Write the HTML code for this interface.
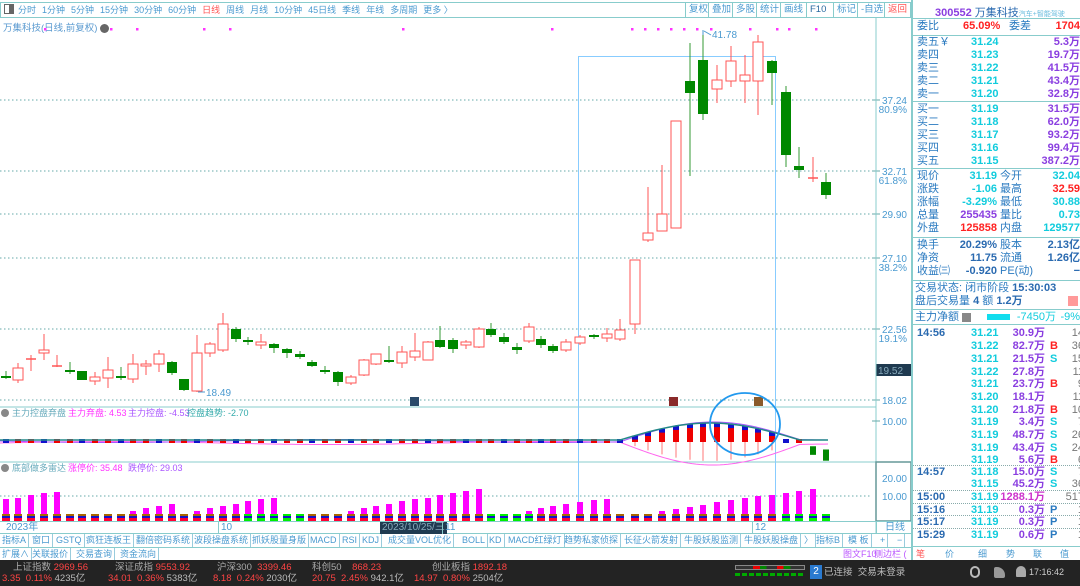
<!DOCTYPE html><html><head><meta charset="utf-8"><style>
*{margin:0;padding:0;box-sizing:border-box}
body{width:1080px;height:586px;overflow:hidden;background:#fff;font-family:"Liberation Sans","Noto Sans CJK SC",sans-serif;position:relative}
.a{position:absolute;white-space:nowrap}
#top{position:absolute;left:0;top:2px;width:911px;height:16px;border:1px solid #8cc;font-size:9px;color:#4a9ad0;line-height:14px;white-space:nowrap}
#top span{margin-right:6px}
.tb{position:absolute;top:2px;height:16px;border-left:1px solid #8cc;font-size:9.5px;color:#4a9ad0;padding:0 3px;line-height:15px}
#rp{position:absolute;left:911px;top:0;width:169px;height:560px;border-left:2px solid #8cc;font-size:11px}
.r{position:absolute;left:2px;width:165px;height:13px;line-height:13px}
.l{color:#2a7ac0;position:absolute;left:2px}
.hl{position:absolute;left:0;width:169px;border-top:1px solid #8cc}
.btn{position:absolute;font-size:9px;color:#4a9ad0;border-right:1px solid #9cd;padding:0 2px;height:13px;line-height:13px}
</style></head><body>
<div id="top"><span style="display:inline-block;width:10px;height:10px;border:1px solid #666;margin:1px 4px 0 3px;vertical-align:top;background:linear-gradient(90deg,#fff 50%,#666 50%)"></span><span>分时</span><span>1分钟</span><span>5分钟</span><span>15分钟</span><span>30分钟</span><span>60分钟</span><span style="color:#f55">日线</span><span>周线</span><span>月线</span><span>10分钟</span><span>45日线</span><span>季线</span><span>年线</span><span>多周期</span><span>更多 〉</span></div>
<div class="tb" style="left:685px">复权</div><div class="tb" style="left:708px">叠加</div><div class="tb" style="left:732px">多股</div><div class="tb" style="left:756px">统计</div><div class="tb" style="left:780px">画线</div><div class="tb" style="left:806px;color:#2a6aa0">F10</div><div class="tb" style="left:833px">标记</div><div class="tb" style="left:857px">-自选</div><div class="tb" style="left:884px;color:#f55;border-right:1px solid #8cc">返回</div>
<div class="a" style="left:3px;top:20px;font-size:9.5px;color:#5a9ad0">万集科技(日线,前复权) <span style="display:inline-block;width:9px;height:9px;border-radius:5px;background:#666;vertical-align:middle"></span></div>
<svg id="ch" class="a" style="left:0;top:0" width="911" height="535"></svg>
<div class="a" style="left:0;top:521px;width:911px;height:13px;border-top:1px solid #8cc;border-bottom:1px solid #8cc;font-size:10px;color:#4a9ad0;line-height:12px">
<span class="a" style="left:6px">2023年</span><span class="a" style="left:218px;border-left:1px solid #8cc;padding-left:2px">10</span><span class="a" style="left:380px;background:#1f3a50;color:#8ab;padding:0 2px">2023/10/25/三</span><span class="a" style="left:442px;border-left:1px solid #8cc;padding-left:2px">11</span><span class="a" style="left:752px;border-left:1px solid #8cc;padding-left:2px">12</span><span class="a" style="left:876px;border-left:1px solid #8cc;padding-left:8px;width:35px">日线</span></div>
<div class="a" style="left:0;top:534px;width:911px;height:14px;border-bottom:1px solid #8cc">
<span class="btn" style="left:0">指标A</span><span class="btn" style="left:30px">窗口</span><span class="btn" style="left:54px">GSTQ</span><span class="btn" style="left:84px">疯狂连板王</span><span class="btn" style="left:134px">翻倍密码系统</span><span class="btn" style="left:192px">波段操盘系统</span><span class="btn" style="left:250px">抓妖股量身版</span><span class="btn" style="left:308px">MACD</span><span class="btn" style="left:340px">RSI</span><span class="btn" style="left:360px">KDJ</span><span class="btn" style="left:386px">成交量VOL优化</span><span class="btn" style="left:460px">BOLL</span><span class="btn" style="left:487px">KD</span><span class="btn" style="left:506px">MACD红绿灯</span><span class="btn" style="left:562px">趋势私家侦探</span><span class="btn" style="left:622px">长征火箭发射</span><span class="btn" style="left:682px">牛股妖股监测</span><span class="btn" style="left:742px">牛股妖股操盘</span><span class="btn" style="left:802px">〉</span><span class="btn" style="left:814px">指标B</span><span class="btn" style="left:846px">模 板</span><span class="btn" style="left:878px">+</span><span class="btn" style="left:895px">−</span></div>
<div class="a" style="left:0;top:548px;width:1080px;height:12px;font-size:9px;color:#4a9ad0;line-height:12px">
<span class="btn" style="left:0;height:12px">扩展∧</span><span class="btn" style="left:30px;height:12px">关联报价</span><span class="btn" style="left:74px;height:12px">交易查询</span><span class="btn" style="left:118px;height:12px">资金流向</span><span class="a" style="left:843px;color:#b5f">图文F10</span><span class="a" style="left:874px;color:#b5f">侧边栏 (</span>
<span class="a" style="left:916px;color:#f55">笔</span><span class="a" style="left:945px">价</span><span class="a" style="left:978px">细</span><span class="a" style="left:1006px">势</span><span class="a" style="left:1033px">联</span><span class="a" style="left:1060px">值</span></div>
<div class="a" style="left:0;top:560px;width:1080px;height:26px;background:#232323;font-size:9.5px;line-height:11px">
<div class="a" style="left:13px;top:2px;color:#aaa">上证指数 <span style="color:#f44">2969.56</span></div><div class="a" style="left:2px;top:13px;color:#f44">3.35 &nbsp;0.11% <span style="color:#bbb">4235亿</span></div>
<div class="a" style="left:115px;top:2px;color:#aaa">深证成指 <span style="color:#f44">9553.92</span></div><div class="a" style="left:108px;top:13px;color:#f44">34.01 &nbsp;0.36% <span style="color:#bbb">5383亿</span></div>
<div class="a" style="left:217px;top:2px;color:#aaa">沪深300 &nbsp;<span style="color:#f44">3399.46</span></div><div class="a" style="left:213px;top:13px;color:#f44">8.18 &nbsp;0.24% <span style="color:#bbb">2030亿</span></div>
<div class="a" style="left:312px;top:2px;color:#aaa">科创50 &nbsp;&nbsp;&nbsp;<span style="color:#f44">868.23</span></div><div class="a" style="left:312px;top:13px;color:#f44">20.75 &nbsp;2.45% <span style="color:#bbb">942.1亿</span></div>
<div class="a" style="left:432px;top:2px;color:#aaa">创业板指 <span style="color:#f44">1892.18</span></div><div class="a" style="left:414px;top:13px;color:#f44">14.97 &nbsp;0.80% <span style="color:#bbb">2504亿</span></div>
<div class="a" style="left:735px;top:5px;width:70px;height:5px;border:1px solid #888;background:linear-gradient(90deg,#333 25%,#e00 25%,#e00 35%,#080 35%,#080 45%,#333 45%,#333 60%,#e00 60%,#e00 70%,#080 70%,#080 80%,#333 80%)"></div>
<div class="a" style="left:735px;top:13px;width:70px;height:3px;background:repeating-linear-gradient(90deg,#0a0 0 5px,transparent 5px 7px)"></div>
<div class="a" style="left:810px;top:5px;width:12px;height:14px;background:#2a7ad0;color:#fff;text-align:center;line-height:14px;font-size:10px">2</div>
<div class="a" style="left:824px;top:7px;color:#bbb;font-size:9.5px">已连接 &nbsp;交易未登录</div>
<div class="a" style="left:970px;top:6px;width:10px;height:12px;border-radius:5px;border:2px solid #bbb"></div>
<div class="a" style="left:994px;top:7px;width:11px;height:11px;background:#999;border-radius:2px 8px 2px 2px"></div>
<div class="a" style="left:1016px;top:6px;width:10px;height:11px;background:#aaa;border-radius:5px 5px 1px 1px"></div>
<div class="a" style="left:1029px;top:7px;color:#ccc;font-size:9px">17:16:42</div>
</div>
<div id="rp">
<div class="a" style="left:22px;top:4px;font-size:11px;color:#8a3ee0;font-weight:bold">300552 <span style="font-weight:normal;color:#2a6ab0">万集科技</span><span style="font-size:7px;color:#6bd;font-weight:normal">汽车+智能驾驶</span></div>
<div class="hl" style="top:18px"></div>
<div class="r" style="top:20px"><span class="l">委比</span><span class="a" style="left:48px;color:#f22;font-weight:bold">65.09%</span><span class="a" style="left:94px;color:#2a7ac0">委差</span><span class="a" style="right:0;color:#f22;font-weight:bold">1704</span></div>
<div class="hl" style="top:35px"></div>
<div id="ob"></div>
</div>
<script>
const rp=document.getElementById('ob');let h='';
function row(y,l,p,v){h+=`<div class="r" style="top:${y}px"><span class="l">${l}</span><span class="a" style="left:56px;color:#1cd;font-weight:bold">${p}</span><span class="a" style="right:0;color:#8a3ee0;font-weight:bold">${v}</span></div>`}
[['卖五￥','31.24','5.3万'],['卖四','31.23','19.7万'],['卖三','31.22','41.5万'],['卖二','31.21','43.4万'],['卖一','31.20','32.8万']].forEach((d,i)=>row(36+i*13,...d));
h+='<div class="hl" style="top:101px"></div>';
[['买一','31.19','31.5万'],['买二','31.18','62.0万'],['买三','31.17','93.2万'],['买四','31.16','99.4万'],['买五','31.15','387.2万']].forEach((d,i)=>row(103+i*13,...d));
h+='<div class="hl" style="top:168px"></div>';
function r4(y,a,b,c,d,bc,dc){h+=`<div class="r" style="top:${y}px"><span class="l">${a}</span><span class="a" style="right:83px;color:${bc};font-weight:bold">${b}</span><span class="a" style="left:85px;color:#2a7ac0">${c}</span><span class="a" style="right:0;color:${dc};font-weight:bold">${d}</span></div>`}
r4(170,'现价','31.19','今开','32.04','#1cd','#1cd');r4(183,'涨跌','-1.06','最高','32.59','#1cd','#f22');r4(196,'涨幅','-3.29%','最低','30.88','#1cd','#1cd');r4(209,'总量','255435','量比','0.73','#8a3ee0','#1cd');r4(222,'外盘','125858','内盘','129577','#f22','#1cd');
h+='<div class="hl" style="top:237px"></div>';
r4(239,'换手','20.29%','股本','2.13亿','#2a6ab0','#2a6ab0');r4(252,'净资','11.75','流通','1.26亿','#2a6ab0','#2a6ab0');r4(265,'收益㈢','-0.920','PE(动)','−','#2a6ab0','#2a6ab0');
h+='<div class="hl" style="top:280px"></div>';
h+='<div class="r" style="top:282px;color:#2a7ac0">交易状态: 闭市阶段 <b style="color:#2a6ab0">15:30:03</b></div><div class="r" style="top:295px;color:#2a7ac0">盘后交易量 <b style="color:#2a6ab0">4</b> 额 <b style="color:#2a6ab0">1.2万</b><span class="a" style="right:2px;top:1px;width:10px;height:10px;background:#f99"></span></div>';
h+='<div class="hl" style="top:309px"></div>';
h+='<div class="r" style="top:311px;color:#2a7ac0">主力净额 <span style="display:inline-block;width:9px;height:9px;background:#888;vertical-align:middle"></span><span class="a" style="left:72px;top:3px;width:23px;height:6px;background:#1de"></span><span class="a" style="right:24px;color:#1cd">-7450万</span><span class="a" style="right:0;color:#1cd">-9%</span></div>';
h+='<div class="hl" style="top:324px"></div>';
const T=[['14:56','31.21','30.9万','','14'],['','31.22','82.7万','B','36'],['','31.21','21.5万','S','15'],['','31.22','27.8万','','11'],['','31.21','23.7万','B','9'],['','31.20','18.1万','','11'],['','31.20','21.8万','B','10'],['','31.19','3.4万','S','7'],['','31.19','48.7万','S','26'],['','31.19','43.4万','S','24'],['','31.19','5.6万','B','6'],['14:57','31.18','15.0万','S','7'],['','31.15','45.2万','S','36'],['15:00','31.19','1288.1万','','517'],['15:16','31.19','0.3万','P','1'],['15:17','31.19','0.3万','P','1'],['15:29','31.19','0.6万','P','1']];
const Y=[327,340,353,366,378,391,404,416,429,442,454,466,478,491,504,516,529];
T.forEach((t,i)=>{let y=Y[i];let bc=t[3]=='B'?'#f22':t[3]=='S'?'#1cd':'#2a7ac0';let vc=t[0]=='15:00'?'#c3c':'#8a3ee0';
if(i==11||i>=13)h+=`<div class="hl" style="top:${y-1}px;border-top:1px dotted #8aa"></div>`;
h+=`<div class="r" style="top:${y}px;font-weight:bold"><span class="l" style="color:#2a6ab0">${t[0]}</span><span class="a" style="left:56px;color:#1cd">${t[1]}</span><span class="a" style="right:35px;color:${vc}">${t[2]}</span><span class="a" style="left:135px;color:${bc}">${t[3]}</span><span class="a" style="right:-4px;color:#777;font-weight:normal">${t[4]}</span></div>`});
h+='<div class="hl" style="top:546px"></div>';
rp.innerHTML=h;

const s=document.getElementById('ch');let g='';
function L(x1,y1,x2,y2,c,w,d){g+=`<line x1="${x1}" y1="${y1}" x2="${x2}" y2="${y2}" stroke="${c}" stroke-width="${w||1}" ${d?'stroke-dasharray="'+d+'"':''}/>`}
function Tx(x,y,t,c,sz,a){g+=`<text x="${x}" y="${y}" fill="${c}" font-size="${sz||10}" ${a?'text-anchor="'+a+'"':''} font-family="Liberation Sans,Noto Sans CJK SC,sans-serif">${t}</text>`}
[100,171,214,258,329,400].forEach(y=>L(0,y,872,y,'#6aa','1','1.5 2.5'));
[[100,'37.24','80.9%'],[171,'32.71','61.8%'],[214,'29.90'],[258,'27.10','38.2%'],[329,'22.56','19.1%'],[400,'18.02']].forEach(d=>{L(872,d[0],880,d[0],'#6aa');Tx(907,d[0]+4,d[1],'#4a9ad0',10,'end');if(d[2])Tx(907,d[0]+13,d[2],'#4a9ad0',10,'end')});
g+='<rect x="876" y="364" width="35" height="12" fill="#1f3a50"/>';Tx(878,374,'19.52','#8ab',10);
L(876,18,876,534,'#8cc');
L(0,407,876,407,'#8cc');L(0,462,876,462,'#8cc');
L(872,421,880,421,'#6aa');Tx(907,425,'10.00','#4a9ad0',10,'end');
L(0,496,872,496,'#6aa',1,'1.5 2.5');Tx(907,500,'10.00','#4a9ad0',10,'end');Tx(907,482,'20.00','#4a9ad0',10,'end');
g+='<rect x="876" y="462" width="35" height="59" fill="none" stroke="#699" stroke-width="1.5"/>';
g+='<rect x="578.5" y="56.5" width="197" height="465" fill="none" stroke="#8cf"/>';
[45,111,137,204,230,403,552,632,645,658,671,684,697,711,750,777,789,816].forEach(x=>g+=`<rect x="${x-1}" y="28" width="2.5" height="2.5" fill="#f3f"/>`);
const C=[[6,'g',376,378,371,379],[18,'r',368,380,363,383],[31,'r',359,360,355,371],[44,'r',350,353,334,360],[57,'r',366,366,355,367],[70,'g',370,372,362,374],[82,'g',371,380,371,380],[95,'r',377,381,372,385],[108,'r',370,378,357,388],[121,'g',376,378,367,380],[133,'r',364,379,354,383],[146,'r',364,366,360,375],[159,'r',354,364,350,372],[172,'g',362,373,361,375],[184,'g',379,390,379,391],[197,'r',353,391,335,392],[210,'r',344,353,342,357],[223,'r',324,350,313,352],[236,'g',329,339,327,342],[248,'g',340,342,337,345],[261,'r',342,345,334,349],[274,'g',344,348,343,353],[287,'g',349,353,348,358],[300,'g',354,357,351,359],[312,'g',362,366,360,367],[325,'g',370,372,366,374],[338,'g',372,382,371,386],[351,'r',377,383,375,385],[364,'r',360,375,359,376],[376,'r',354,364,354,365],[389,'g',360,362,346,363],[402,'r',352,363,346,368],[415,'r',351,357,333,361],[428,'r',342,360,341,360],[440,'g',340,347,326,348],[453,'g',340,349,338,353],[466,'r',342,345,340,349],[479,'r',329,347,327,348],[491,'g',329,335,323,337],[504,'g',337,342,333,344],[517,'g',347,350,343,354],[529,'r',327,341,323,343],[541,'g',339,345,336,348],[553,'g',346,351,344,353],[566,'r',342,350,339,352],[580,'r',337,343,335,345],[594,'g',335,337,334,339],[607,'r',334,338,328,342],[620,'r',330,339,319,341],[635,'r',260,324,260,334],[648,'r',233,240,187,242],[662,'r',214,231,165,231],[676,'r',121,228,121,228],[690,'g',81,93,43,176],[703,'g',60,114,30,120],[717,'r',80,89,65,103],[731,'r',61,81,46,87],[745,'r',75,81,55,103],[758,'r',42,81,35,115],[772,'g',61,73,60,105],[786,'g',92,155,86,167],[799,'g',166,170,147,178],[813,'r',178,178,157,182],[826,'g',182,195,173,199]];
C.forEach(c=>{let[x,t,o,cl,hi,lo]=c;let col=t=='r'?'#f55':'#080';L(x,hi,x,lo,t=='r'?'#f55':'#393');
if(t=='r'){if(cl-o<1.5)L(x-5,o,x+5,o,col,1.5);else g+=`<rect x="${x-5}" y="${o}" width="10" height="${cl-o}" fill="#fff" stroke="${col}"/>`}else g+=`<rect x="${x-5}" y="${o}" width="10" height="${Math.max(cl-o,2)}" fill="${col}"/>`});
L(703,30,703,35,'#4a9ad0');Tx(712,38,'41.78','#4a9ad0',10);L(704,31,711,35,'#4a9ad0');
Tx(206,396,'18.49','#4a9ad0',10);L(198,392,205,392,'#4a9ad0');
g+='<rect x="410" y="397" width="9" height="9" fill="#2a4a6a"/><rect x="669" y="397" width="9" height="9" fill="#8a2a2a"/><rect x="754" y="397" width="9" height="9" fill="#8a5a2a"/>';
g+='<circle cx="5" cy="413" r="4" fill="#888"/>';Tx(12,416,'主力控盘弃盘','#6ab',9);Tx(68,416,'主力弃盘: 4.53','#f3f',9);Tx(128,416,'主力控盘: -4.53','#a5f',9);Tx(187,416,'控盘趋势: -2.70','#3aa',9);
let p1='',p2='',p3='';for(let x=0;x<=830;x+=4){let b=0;if(x>620&&x<800)b=Math.sin((x-620)/180*Math.PI);let f=Math.sin(x/70)*1.5;p1+=`${x},${441-b*18+f} `;p2+=`${x},${443+b*21-f} `;p3+=`${x},${440-b*17} `}
g+=`<polyline points="${p2}" fill="none" stroke="#f6e" /><polyline points="${p1}" fill="none" stroke="#a5f"/>`;
for(let i=0;i<C.length;i++){let x=C[i][0];let b=0;if(x>620&&x<800)b=Math.sin((x-620)/180*Math.PI);if(b>0.2&&x<780){L(x,441,x,441+b*20,'#f77');g+=`<rect x="${x-3}" y="${440-b*16}" width="6" height="${b*16+2}" fill="#e00"/><rect x="${x-3}" y="${440-b*17}" width="6" height="4" fill="#11c"/>`}else if(x>=800){g+=`<rect x="${x-3}" y="${443+(x-800)/4}" width="6" height="${6+(x-800)/5}" fill="#080"/>`}else g+=`<rect x="${x-3}" y="439" width="6" height="4" fill="${i%3==0?'#11c':'#e00'}"/>`}
g+=`<polyline points="${p3}" fill="none" stroke="#288" stroke-width="1.5"/>`;
g+='<ellipse cx="745" cy="424" rx="35" ry="31" fill="none" stroke="#29e" stroke-width="1.8"/>';
g+='<circle cx="5" cy="468" r="4" fill="#888"/>';Tx(12,471,'底部做多雷达','#6ab',9);Tx(68,471,'涨停价: 35.48','#f3f',9);Tx(128,471,'跌停价: 29.03','#a5f',9);
const H=[16,17,20,22,23,0,0,0,0,0,4,7,9,11,0,4,7,9,11,14,16,17,0,0,0,0,0,4,7,9,11,14,16,17,20,22,24,26,0,0,0,4,7,9,11,13,15,16,0,0,0,4,6,8,10,13,15,17,19,20,22,24,26,0,0,0,0];
C.forEach((c,i)=>{let x=c[0];let hh=H[i]||0;if(hh)g+=`<rect x="${x-3}" y="${515-hh}" width="6" height="${hh}" fill="#f0f"/>`;let gr=[19,20,21,22,23,38,39,40,41].includes(i)||x>785;g+=`<rect x="${x-4}" y="514" width="8" height="2" fill="${gr?'#0e0':'#a60'}"/><rect x="${x-4}" y="516" width="8" height="2" fill="#11c"/><rect x="${x-4}" y="518" width="8" height="3" fill="${gr?'#0e0':'#f03'}"/>`});
s.innerHTML=g;
</script>
</body></html>
